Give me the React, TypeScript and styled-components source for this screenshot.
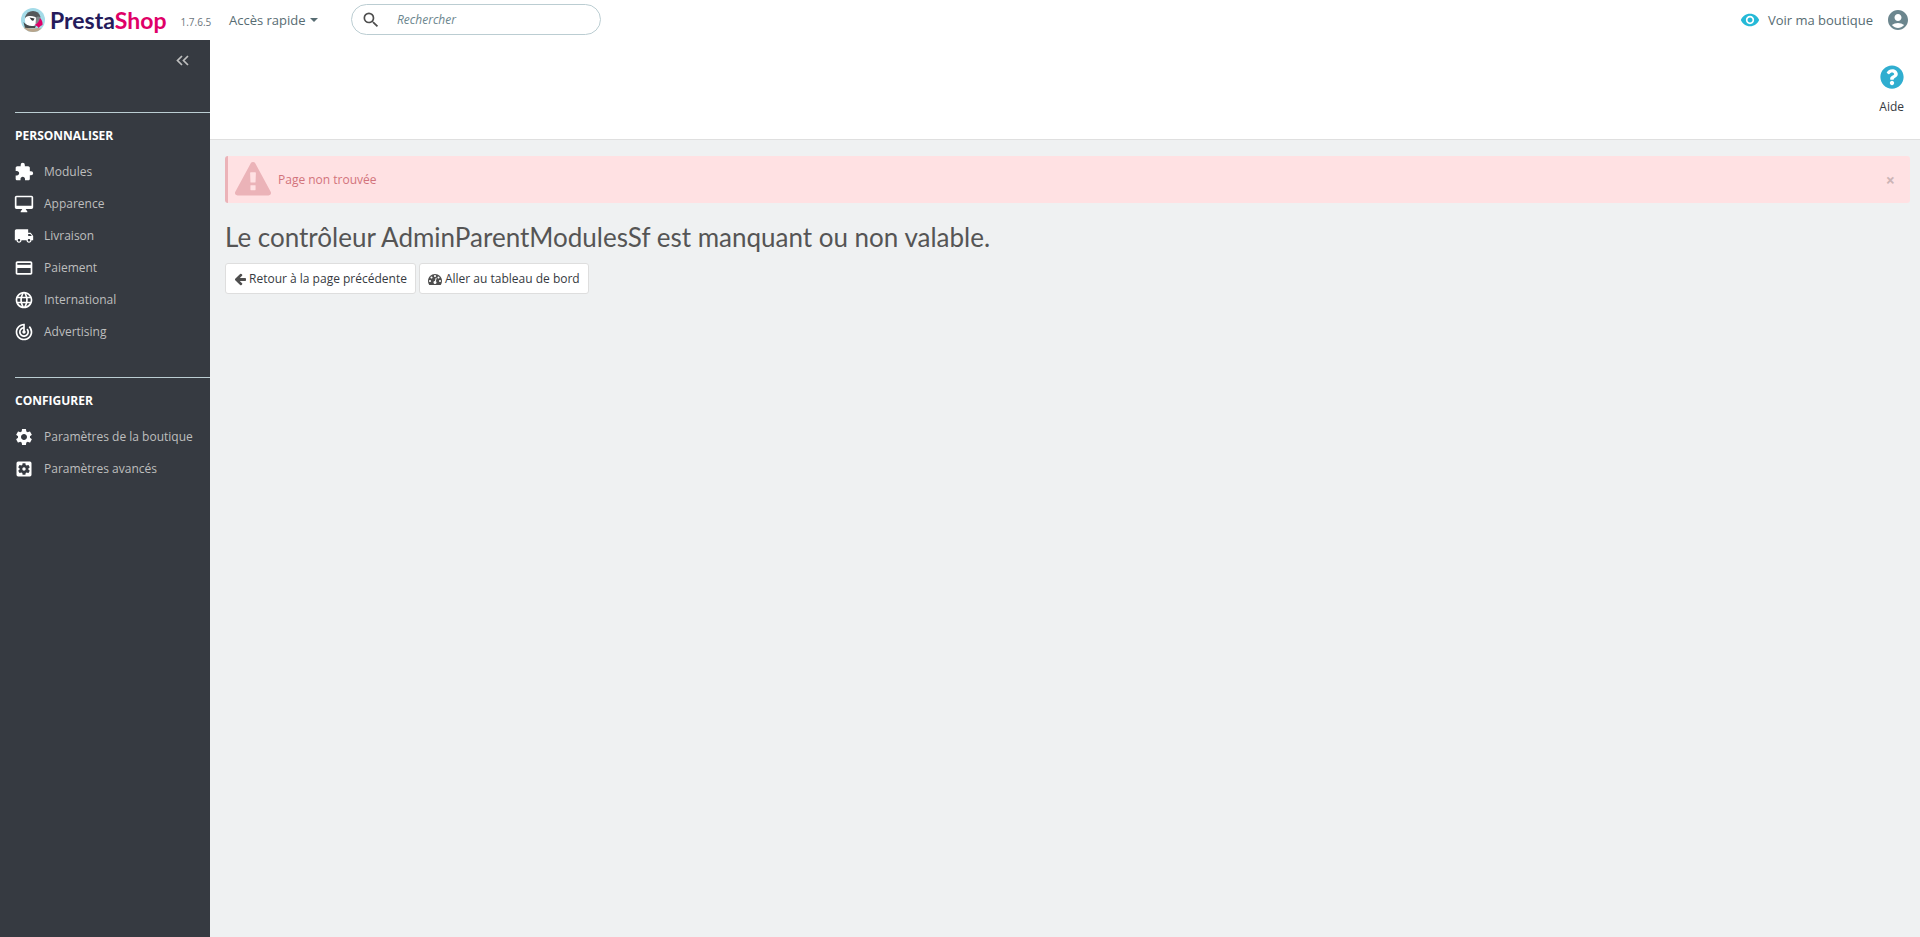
import React from "react";
import styled, { createGlobalStyle } from "styled-components";
import {
  MdAccountCircle,
  MdExtension,
  MdLanguage,
  MdLocalShipping,
  MdPayment,
  MdSearch,
  MdSettings,
  MdSettingsApplications,
  MdTrackChanges,
  MdVisibility,
} from "react-icons/md";
import { FaQuestionCircle } from "react-icons/fa";

const GlobalStyle = createGlobalStyle`
  *, *::before, *::after { box-sizing: border-box; }
  body {
    margin: 0;
    background: #eff1f2;
    color: #363a41;
    font-family: "Open Sans", "Noto Sans", sans-serif;
    font-size: 12px;
    line-height: 20px;
  }
  a { color: inherit; text-decoration: none; }
  button { font: inherit; cursor: pointer; }
  svg { display: block; flex: none; }
`;

const Page = styled.div`
  display: flex;
  flex-direction: column;
  min-height: 100vh;
`;

const TopBar = styled.header`
  display: flex;
  align-items: center;
  height: 40px;
  padding: 0 10px 1px 20px;
  background: #fff;
`;

const Brand = styled.div`
  display: flex;
  align-items: center;
  width: 209px;
`;

const BrandLink = styled.a`
  display: flex;
  align-items: center;
  gap: 4px;
  color: #251b5b;
  font-family: Lato, sans-serif;
  font-size: 23px;
  font-weight: 700;
  line-height: 32px;
`;

const BrandAccent = styled.span`
  color: #df0067;
`;

const Version = styled.span`
  margin: 5px 0 0 14px;
  color: #6c757d;
  font-size: 10px;
`;

const QuickAccess = styled.button`
  display: flex;
  align-items: center;
  gap: 4px;
  width: 122px;
  padding: 0;
  border: 0;
  background: none;
  color: #576c72;
  && { font-size: 13px; }
`;

const Caret = styled.span`
  border: 4px solid transparent;
  border-top-color: #576c72;
  border-bottom: 0;
`;

const SearchForm = styled.form`
  display: flex;
  align-items: center;
  gap: 16px;
  width: 250px;
  height: 31px;
  padding: 0 12px 0 9px;
  border: 1px solid #bbcdd2;
  border-radius: 16px;
  color: #4e4e4e;
`;

const SearchInput = styled.input`
  flex: 1;
  min-width: 0;
  padding: 0;
  border: 0;
  outline: 0;
  background: none;
  font: italic 12px/20px "Open Sans", sans-serif;
  color: #363a41;
  &::placeholder { color: #6c868e; opacity: 1; }
`;

const TopActions = styled.div`
  display: flex;
  align-items: center;
  gap: 13px;
  margin-left: auto;
`;

const ShopLink = styled.a`
  display: flex;
  align-items: center;
  gap: 8px;
  color: #576c72;
  font-size: 13px;
  svg { color: #25b9d7; }
`;

const IconButton = styled.button<{ $color: string }>`
  display: flex;
  padding: 0;
  border: 0;
  background: none;
  color: ${(p) => p.$color};
`;

const Body = styled.div`
  display: flex;
  flex: 1;
`;

const Sidebar = styled.nav`
  flex: none;
  width: 210px;
  padding-left: 15px;
  background: #363a41;
`;

const CollapseRow = styled.div`
  display: flex;
  justify-content: flex-end;
  align-items: flex-start;
  height: 72px;
  padding: 15px 21px 0 0;
`;

const MenuSection = styled.section`
  margin-bottom: 29px;
  border-top: 1px solid #bbcdd2;
`;

const MenuTitle = styled.h2`
  margin: 0;
  padding: 13px 0 10px;
  color: #fff;
  font-size: 12px;
  font-weight: 700;
  line-height: 20px;
  text-transform: uppercase;
`;

const MenuList = styled.ul`
  margin: 0 0 0 -1px;
  padding: 0;
  list-style: none;
`;

const MenuLink = styled.a`
  display: flex;
  align-items: center;
  gap: 10px;
  height: 32px;
  color: #bebebe;
  svg { color: #fff; }
`;

const Content = styled.div`
  flex: 1;
  min-width: 0;
`;

const PageHead = styled.div`
  display: flex;
  justify-content: flex-end;
  height: 100px;
  padding: 25px 16px 0 0;
  border-bottom: 1px solid #dfdfdf;
  background: #fff;
`;

const HelpLink = styled.a`
  display: flex;
  flex-direction: column;
  align-items: center;
  gap: 8px;
  svg { color: #30aed0; }
`;

const Main = styled.main`
  padding: 16px 10px 20px 15px;
`;

const Alert = styled.div`
  display: flex;
  align-items: center;
  gap: 7px;
  height: 47px;
  margin-bottom: 16px;
  padding: 0 15px 0 7px;
  border-left: 3px solid #ebb3b8;
  border-radius: 3px;
  background: #ffe1e3;
  color: #d2737b;
`;

const AlertClose = styled.button`
  margin-left: auto;
  padding: 0;
  border: 0;
  background: none;
  color: #ccb4b6;
  && { font-size: 16px; font-weight: 700; }
`;

const Heading = styled.h1`
  margin: 0 0 8px;
  color: #555;
  font-family: "Ubuntu Condensed", Lato, "Open Sans", sans-serif;
  font-size: 26px;
  font-weight: 400;
  line-height: 36px;
`;

const ButtonRow = styled.div`
  display: flex;
  gap: 3px;
`;

const ActionLink = styled.a`
  display: flex;
  align-items: center;
  gap: 3px;
  height: 31px;
  padding: 0 8px;
  border: 1px solid #dedede;
  border-radius: 3px;
  background: #fff;
  svg { color: #4e4e4e; }
`;

const PuffinLogo = () => (
  <svg width="26" height="26" viewBox="0 0 26 26" aria-hidden="true">
    <defs>
      <clipPath id="puffin-disc">
        <circle cx="13" cy="13" r="12" />
      </clipPath>
    </defs>
    <g clipPath="url(#puffin-disc)">
      <rect width="26" height="26" fill="#a4dbe8" />
      <path d="M5 10Q7 4 13 4Q19 4 20.500 10L18 12H5Z" fill="#54585a" />
      <path d="M5 14Q4 9.500 9 9Q15 8.500 17 11.500L16.500 17Q13 20 9 19Q5 18 5 14Z" fill="#fff" />
      <path d="M9.500 10.500L14.500 11.500L13.500 13.500Q11.500 14 11 12.500Z" fill="#34383a" />
      <path d="M3.500 15Q8 20.500 16 18.500L15 21H5Z" fill="#474b4c" />
      <path d="M16 11Q18 8.500 20.500 10.500L20 15L15.500 17.500Z" fill="#7f8688" />
      <path d="M20 11Q23 14 22.500 18L20.500 19L18.500 21Q18 19 14.500 18Q19 16 20 11Z" fill="#df0067" />
      <path d="M4 20.500Q12 22 18 21L24 22V26H2Z" fill="#b9a58c" />
    </g>
  </svg>
);

const ChevronsLeft = () => (
  <svg width="13" height="11" viewBox="0 0 13 11" fill="none" stroke="#bebebe" strokeWidth="1.700" aria-hidden="true">
    <path d="M6 1L1.500 5.500L6 10M12 1L7.500 5.500L12 10" />
  </svg>
);

type IconProps = { size?: number };

const DesktopIcon = ({ size = 20 }: IconProps) => (
  <svg width={size} height={size} viewBox="0 0 24 24" fill="currentColor" aria-hidden="true">
    <path d="M21 2H3c-1.100 0-2 .9-2 2v12c0 1.100.9 2 2 2h7l-2 3v1h8v-1l-2-3h7c1.100 0 2-.9 2-2V4c0-1.100-.9-2-2-2zm0 12H3V4h18v10z" />
  </svg>
);

const WarningIcon = () => (
  <svg width="36" height="36" viewBox="0 0 1792 1792" fill="#ebb3b8" aria-hidden="true">
    <path d="M1024 1375v-190q0-14-9.500-23.500t-22.500-9.500h-192q-13 0-22.500 9.500t-9.500 23.500v190q0 14 9.500 23.500t22.500 9.500h192q13 0 22.500-9.500t9.500-23.500zm-2-374l18-459q0-12-10-19-13-11-24-11h-220q-11 0-24 11-10 7-10 21l17 457q0 10 10 16.500t24 6.500h185q14 0 23.500-6.500t10.500-16.500zm-14-934l768 1408q35 63-2 126-17 29-46.500 46t-63.500 17h-1536q-34 0-63.500-17t-46.500-46q-37-63-2-126l768-1408q17-31 47-49t65-18 65 18 47 49z" />
  </svg>
);

const ArrowIcon = () => (
  <svg width="12" height="14" viewBox="64 0 1600 1792" fill="currentColor" aria-hidden="true">
    <path d="M1664 896v128q0 53-32.500 90.500t-84.500 37.500h-704l293 294q38 36 38 90t-38 90l-75 76q-37 37-90 37-52 0-91-37l-651-652q-37-37-37-90 0-52 37-91l651-650q38-38 91-38 52 0 90 38l75 74q38 38 38 91t-38 91l-293 293h704q52 0 84.500 37.500t32.500 90.500z" />
  </svg>
);

const GaugeIcon = () => (
  <svg width="14" height="14" viewBox="0 0 1792 1792" fill="currentColor" aria-hidden="true">
    <path d="M384 1152q0-53-37.500-90.500t-90.500-37.500-90.500 37.500-37.500 90.500 37.500 90.500 90.500 37.500 90.500-37.500 37.500-90.500zm192-448q0-53-37.500-90.500t-90.500-37.500-90.500 37.500-37.500 90.500 37.500 90.500 90.500 37.500 90.500-37.500 37.500-90.500zm428 481l101-382q6-26-7.500-48.500t-38.500-29.500-48 6.500-30 39.500l-101 382q-60 5-107 43.500t-63 98.500q-20 77 20 146t117 89 146-20 89-117q16-60-6-117t-72-91zm660-33q0-53-37.500-90.500t-90.500-37.500-90.500 37.500-37.500 90.500 37.500 90.500 90.500 37.500 90.500-37.500 37.500-90.500zm-640-640q0-53-37.500-90.500t-90.500-37.500-90.500 37.500-37.500 90.500 37.500 90.500 90.500 37.500 90.500-37.500 37.500-90.500zm448 192q0-53-37.500-90.500t-90.500-37.500-90.500 37.500-37.500 90.500 37.500 90.500 90.500 37.500 90.500-37.500 37.500-90.500zm320 448q0 261-141 483-19 29-54 29h-1402q-35 0-54-29-141-221-141-483 0-182 71-348t191-286 286-191 348-71 348 71 286 191 191 286 71 348z" />
  </svg>
);

type MenuItem = { label: string; icon: React.ComponentType<IconProps> };

const sections: { title: string; items: MenuItem[] }[] = [
  {
    title: "Personnaliser",
    items: [
      { label: "Modules", icon: MdExtension },
      { label: "Apparence", icon: DesktopIcon },
      { label: "Livraison", icon: MdLocalShipping },
      { label: "Paiement", icon: MdPayment },
      { label: "International", icon: MdLanguage },
      { label: "Advertising", icon: MdTrackChanges },
    ],
  },
  {
    title: "Configurer",
    items: [
      { label: "Paramètres de la boutique", icon: MdSettings },
      { label: "Paramètres avancés", icon: MdSettingsApplications },
    ],
  },
];

export default function App() {
  return (
    <Page>
      <GlobalStyle />
      <TopBar>
        <Brand>
          <BrandLink href="#">
            <PuffinLogo />
            <span>Presta<BrandAccent>Shop</BrandAccent></span>
          </BrandLink>
          <Version>1.7.6.5</Version>
        </Brand>
        <QuickAccess type="button">
          Accès rapide
          <Caret />
        </QuickAccess>
        <SearchForm role="search">
          <MdSearch size={20} />
          <SearchInput type="text" placeholder="Rechercher" aria-label="Rechercher" />
        </SearchForm>
        <TopActions>
          <ShopLink href="#">
            <MdVisibility size={20} />
            Voir ma boutique
          </ShopLink>
          <IconButton type="button" $color="#6c868e" aria-label="Compte">
            <MdAccountCircle size={24} />
          </IconButton>
        </TopActions>
      </TopBar>
      <Body>
        <Sidebar>
          <CollapseRow>
            <IconButton type="button" $color="#bebebe" aria-label="Réduire le menu">
              <ChevronsLeft />
            </IconButton>
          </CollapseRow>
          {sections.map((section) => (
            <MenuSection key={section.title}>
              <MenuTitle>{section.title}</MenuTitle>
              <MenuList>
                {section.items.map(({ label, icon: Icon }) => (
                  <li key={label}>
                    <MenuLink href="#">
                      <Icon size={20} />
                      {label}
                    </MenuLink>
                  </li>
                ))}
              </MenuList>
            </MenuSection>
          ))}
        </Sidebar>
        <Content>
          <PageHead>
            <HelpLink href="#">
              <FaQuestionCircle size={24} />
              Aide
            </HelpLink>
          </PageHead>
          <Main>
            <Alert role="alert">
              <WarningIcon />
              Page non trouvée
              <AlertClose type="button" aria-label="Fermer">×</AlertClose>
            </Alert>
            <Heading>Le contrôleur AdminParentModulesSf est manquant ou non valable.</Heading>
            <ButtonRow>
              <ActionLink href="#">
                <ArrowIcon />
                Retour à la page précédente
              </ActionLink>
              <ActionLink href="#">
                <GaugeIcon />
                Aller au tableau de bord
              </ActionLink>
            </ButtonRow>
          </Main>
        </Content>
      </Body>
    </Page>
  );
}
